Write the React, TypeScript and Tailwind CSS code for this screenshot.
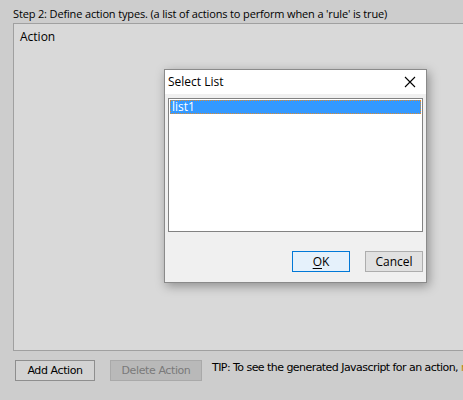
export default function App() {
  return (
    <div className="relative w-[463px] h-[400px] overflow-hidden bg-[#cdcdcd] font-['Segoe_UI','Open_Sans',sans-serif] text-black">
      {/* page */}
      <div className="flex flex-col pl-[13px] pt-[6px]">
        <div className="text-[11px] leading-[16px] whitespace-nowrap tracking-[-0.15px]">
          Step 2: Define action types. (a list of actions to perform when a 'rule' is true)
        </div>
        <div className="mt-px w-[470px] h-[328px] bg-[#d9d9d9] border border-[#a0a0a0] px-[6px] pt-[5px]">
          <div className="text-[12px] leading-[16px]">Action</div>
        </div>
        <div className="flex items-center mt-[9px] ml-[2px] gap-[15px] font-['DejaVu_Sans',sans-serif] text-[11px] tracking-[-0.4px]">
          <button className="shrink-0 w-[80px] h-[21px] bg-[#d3d3d3] border border-[#8e8e8e] leading-none">
            Add Action
          </button>
          <button className="shrink-0 w-[92px] h-[21px] bg-[#b9b9b9] border border-[#a9a9a9] text-[#7a7a7a] leading-none">
            Delete Action
          </button>
          <span className="shrink-0 -ml-[5px] -mt-[4px] whitespace-nowrap tracking-[-0.55px]">
            TIP: To see the generated Javascript for an action, <span className="text-[#c08a00]">r</span>
          </span>
        </div>
      </div>

      {/* modal */}
      <div className="absolute left-[164px] top-[69px] w-[263px] h-[214px] bg-[#f0f0f0] border border-[#8a8a8a] shadow-[2px_3px_10px_rgba(0,0,0,0.35)] flex flex-col">
        <div className="h-[24px] bg-white flex items-center justify-between pl-[3px] pr-[8px]">
          <span className="text-[12px] leading-[16px]">Select List</span>
          <svg width="12" height="12" viewBox="0 0 12 12" className="mr-[2px]">
            <path d="M1 1 L11 11 M11 1 L1 11" stroke="#000" strokeWidth="1.1" fill="none" />
          </svg>
        </div>
        <div className="mx-[3px] mt-[4px] h-[134px] bg-white border border-[#828282] p-px">
          <div className="h-[14px] bg-[#3399ff] border border-dotted border-[#e08a2c] text-white text-[12px] leading-[12px] pl-px">
            list1
          </div>
        </div>
        <div className="flex justify-end gap-[15px] mt-[19px] pr-[3px]">
          <button className="w-[58px] h-[21px] bg-[#e5f1fb] border border-[#0078d7] text-[12px] leading-none">
            <span className="underline underline-offset-2">O</span>K
          </button>
          <button className="w-[58px] h-[21px] bg-[#e1e1e1] border border-[#adadad] text-[12px] leading-none">
            Cancel
          </button>
        </div>
      </div>
    </div>
  );
}
